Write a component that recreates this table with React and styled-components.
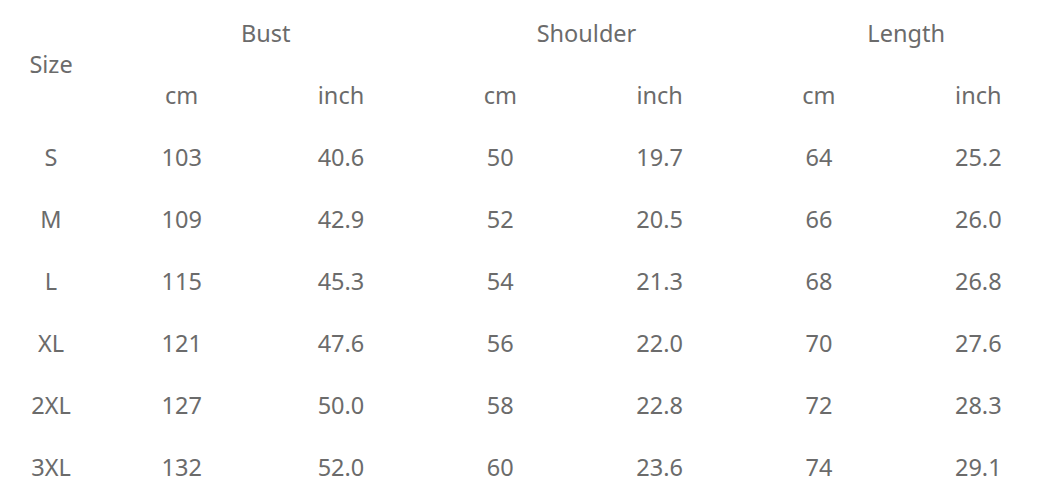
import React from "react";
import styled, { createGlobalStyle } from "styled-components";

const Global = createGlobalStyle`
  html, body { margin: 0; padding: 0; background: #ffffff; }
  body { font-family: "Noto Sans", "Lato", sans-serif; color: #6b6b6b; }
`;

const Wrap = styled.div`
  padding-top: 3px;
  width: 1061px;
`;

const Table = styled.table`
  border-collapse: collapse;
  table-layout: fixed;
  width: 1058px;
`;

const Col = styled.col`
  width: ${(p) => p.$w}px;
`;

const Cell = styled.td`
  height: 62px;
  padding: 0;
  text-align: center;
  vertical-align: middle;
  font-size: 23.5px;
  font-weight: 400;
  line-height: 1;
  color: #6b6b6b;
  white-space: nowrap;
`;

const HeadCell = styled(Cell).attrs({ as: "th" })`
  font-weight: 400;
  padding-left: ${(p) => p.$shift || 0}px;
`;

const groups = [
  { name: "Bust", shift: 9 },
  { name: "Shoulder", shift: 13 },
  { name: "Length", shift: 15 },
];

const rows = [
  ["S", "103", "40.6", "50", "19.7", "64", "25.2"],
  ["M", "109", "42.9", "52", "20.5", "66", "26.0"],
  ["L", "115", "45.3", "54", "21.3", "68", "26.8"],
  ["XL", "121", "47.6", "56", "22.0", "70", "27.6"],
  ["2XL", "127", "50.0", "58", "22.8", "72", "28.3"],
  ["3XL", "132", "52.0", "60", "23.6", "74", "29.1"],
];

export default function App() {
  return (
    <Wrap>
      <Global />
      <Table>
        <colgroup>
          <Col $w={102} />
          {Array.from({ length: 6 }).map((_, i) => (
            <Col key={i} $w={159.3} />
          ))}
        </colgroup>
        <thead>
          <tr>
            <HeadCell rowSpan={2}>Size</HeadCell>
            {groups.map((g) => (
              <HeadCell key={g.name} colSpan={2} $shift={g.shift}>
                {g.name}
              </HeadCell>
            ))}
          </tr>
          <tr>
            {groups.map((g) => (
              <React.Fragment key={g.name}>
                <HeadCell>cm</HeadCell>
                <HeadCell>inch</HeadCell>
              </React.Fragment>
            ))}
          </tr>
        </thead>
        <tbody>
          {rows.map((r) => (
            <tr key={r[0]}>
              {r.map((v, i) => (
                <Cell key={i}>{v}</Cell>
              ))}
            </tr>
          ))}
        </tbody>
      </Table>
    </Wrap>
  );
}
